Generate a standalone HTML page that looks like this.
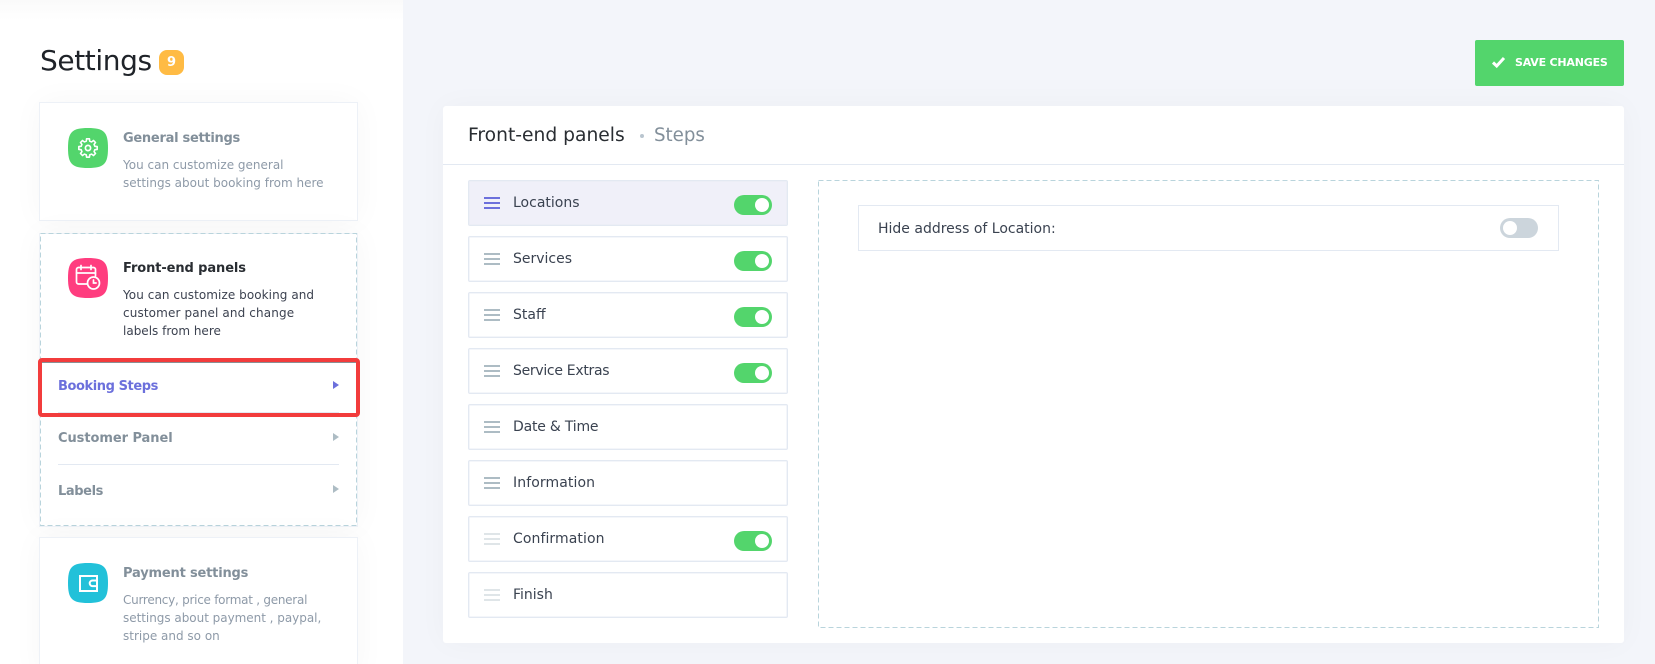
<!DOCTYPE html>
<html lang="en">
<head>
<meta charset="utf-8">
<title>Settings</title>
<style>
*{box-sizing:border-box;margin:0;padding:0}
html,body{width:1655px;height:664px;overflow:hidden;background:#f3f5fa}
body{position:relative;font-family:"DejaVu Sans","Liberation Sans",sans-serif;color:#292d32}
.abs,.t,.card,.item,.tg,.ic{position:absolute}
.t{white-space:nowrap;line-height:20px;height:20px}
#side{position:absolute;left:0;top:0;width:403px;height:664px;background:linear-gradient(#fafafa 0,#fff 20px)}
.card{left:39px;width:319px;background:#fff;border:1px solid #edf1f7;box-shadow:0 0 30px rgba(0,0,0,.035)}
.ic{left:68px;width:40px;height:40px}
.h{font-size:13px;font-weight:700;color:#828f9a}
.d{font-size:12px;color:#8e9aa8}
.dk{color:#292d32}
.dk2{color:#3c4250}
.m{font-size:13px;font-weight:700;color:#828f9a}
.ar{position:absolute;left:333px;width:0;height:0;border-left:6px solid #adbcc4;border-top:4.5px solid transparent;border-bottom:4.5px solid transparent}
.item{left:468px;width:320px;height:46px;background:#fff;border:1px solid #e3e9f2;border-radius:2px;box-shadow:inset 0 0 0 .5px #e9edf4}
.item.a{background:#f0f0f9}
.bars{position:absolute;left:484px;width:16px;height:12px;border-top:2px solid #adbcc4;border-bottom:2px solid #adbcc4}
.bars:after{content:"";position:absolute;left:0;right:0;top:3px;height:2px;background:#adbcc4}
.bars.a,.bars.a:after{border-color:#6c70dc}.bars.a:after{background:#6c70dc}
.bars.o,.bars.o:after{border-color:#dfe5e8}.bars.o:after{background:#dfe5e8}
.lb{left:513px;font-size:14px;color:#3a4250}
.tg{left:734px;width:38px;height:20px;border-radius:10px;background:#53d56c}
.tg:after{content:"";position:absolute;left:21px;top:3px;width:14px;height:14px;border-radius:50%;background:#fff}
.tg.off{background:#ccd5dc}
.tg.off:after{left:3px}
.dash{position:absolute;overflow:visible}
.dash rect{fill:none;stroke:#b9d4dc;stroke-width:1;stroke-dasharray:5 3}
</style>
</head>
<body>
<aside id="side">
  <div class="t" style="left:40px;top:43px;height:36px;line-height:36px;font-size:28px;letter-spacing:-.4px;color:#1f2329">Settings</div>
  <div class="abs" style="left:159px;top:50px;width:25px;height:25px;border-radius:8px;background:#ffbb44;color:#fff;font-size:13px;font-weight:700;text-align:center;line-height:25px">9</div>

  <section class="card" style="top:102px;height:119px"></section>
  <svg class="ic" style="top:128px" viewBox="0 0 40 40"><path d="M20 0C36 0 40 4 40 20C40 36 36 40 20 40C4 40 0 36 0 20C0 4 4 0 20 0Z" fill="#53d56c"/><g fill="none" stroke="#fff" stroke-width="1.700" stroke-linejoin="round" transform="translate(20 20)"><polygon transform="scale(.93)" points="-1.840,-7.370 -1.560,-9.880 1.560,-9.880 1.840,-7.370 3.910,-6.510 5.880,-8.090 8.090,-5.880 6.510,-3.910 7.370,-1.840 9.880,-1.560 9.880,1.560 7.370,1.840 6.510,3.910 8.090,5.880 5.880,8.090 3.910,6.510 1.840,7.370 1.560,9.880 -1.560,9.880 -1.840,7.370 -3.910,6.510 -5.880,8.090 -8.090,5.880 -6.510,3.910 -7.370,1.840 -9.880,1.560 -9.880,-1.560 -7.370,-1.840 -6.510,-3.910 -8.090,-5.880 -5.880,-8.090 -3.910,-6.510"/><circle r="2.600"/></g></svg>
  <div class="t h" style="left:123px;top:129px;letter-spacing:-.28px">General settings</div>
  <div class="t d" style="left:123px;top:155px">You can customize general</div>
  <div class="t d" style="left:123px;top:173px">settings about booking from here</div>

  <section class="card" style="top:233px;height:294px;left:39px;width:319px"></section>
  <svg class="dash" style="left:0;top:0" width="403" height="664"><rect x="40.500" y="233.500" width="316" height="292"/></svg>
  <svg class="ic" style="top:258px" viewBox="0 0 40 40"><path d="M20 0C36 0 40 4 40 20C40 36 36 40 20 40C4 40 0 36 0 20C0 4 4 0 20 0Z" fill="#ff3d7f"/><g fill="none" stroke="#fff" stroke-width="1.700" stroke-linecap="round"><path d="M19 26H10.500a2 2 0 0 1-2-2V11.500a2 2 0 0 1 2-2h15a2 2 0 0 1 2 2V18"/><path d="M8.500 15h19M13 7.500v4M23 7.500v4"/><circle cx="25.500" cy="25" r="6"/><path d="M25.500 22v3h2.600"/></g></svg>
  <div class="t h dk" style="left:123px;top:259px;letter-spacing:-.1px">Front-end panels</div>
  <div class="t d dk2" style="left:123px;top:285px;letter-spacing:.07px">You can customize booking and</div>
  <div class="t d dk2" style="left:123px;top:303px;letter-spacing:.13px">customer panel and change</div>
  <div class="t d dk2" style="left:123px;top:321px">labels from here</div>

  <div class="t m" style="left:58px;top:377px;color:#6c70dc;letter-spacing:-.42px">Booking Steps</div>
  <div class="ar" style="top:381px;border-left-color:#6c70dc"></div>
  <div class="abs" style="left:58px;top:412px;width:281px;height:1px;background:#e3e9f2"></div>
  <div class="t m" style="left:58px;top:429px;letter-spacing:-.06px">Customer Panel</div>
  <div class="ar" style="top:433px"></div>
  <div class="abs" style="left:58px;top:464px;width:281px;height:1px;background:#e3e9f2"></div>
  <div class="t m" style="left:58px;top:482px;letter-spacing:-.4px">Labels</div>
  <div class="ar" style="top:485px"></div>
  <div class="abs" style="left:38px;top:358px;width:322px;height:59px;border:4px solid #f23c3c;border-radius:4px;box-shadow:inset 0 1px 0 #8a8f94"></div>

  <section class="card" style="top:537px;height:140px"></section>
  <svg class="ic" style="top:563px" viewBox="0 0 40 40"><path d="M20 0C36 0 40 4 40 20C40 36 36 40 20 40C4 40 0 36 0 20C0 4 4 0 20 0Z" fill="#22c1d9"/><g fill="none" stroke="#fff" stroke-width="2"><path d="M12 13h17v15h-17z"/><path d="M29 17.500h-4.500a2.800 2.800 0 0 0 0 5.600h4.500"/></g></svg>
  <div class="t h" style="left:123px;top:564px;letter-spacing:-.18px">Payment settings</div>
  <div class="t d" style="left:123px;top:590px;letter-spacing:-.26px">Currency, price format , general</div>
  <div class="t d" style="left:123px;top:608px;letter-spacing:-.03px">settings about payment , paypal,</div>
  <div class="t d" style="left:123px;top:626px">stripe and so on</div>
</aside>

<div class="abs" style="left:1475px;top:40px;width:149px;height:46px;background:#53d56c;border-radius:2px"></div>
<svg class="abs" style="left:1491px;top:55px" width="15" height="14" viewBox="0 0 15 14"><path d="M2 7.500l3.700 3.500L13 3" fill="none" stroke="#fff" stroke-width="3"/></svg>
<div class="t" style="left:1515px;top:53px;font-size:11px;font-weight:700;letter-spacing:-.2px;color:#fff">SAVE CHANGES</div>

<main class="abs" style="left:443px;top:106px;width:1181px;height:537px;background:#fff;border-radius:3px;box-shadow:0 0 30px rgba(0,0,0,.03)"></main>
<div class="abs" style="left:443px;top:164px;width:1181px;height:1px;background:#e3e9f2"></div>
<div class="t" style="left:468px;top:126px;font-size:18.700px;color:#292d32">Front-end panels</div>
<div class="abs" style="left:640px;top:134px;width:4px;height:4px;border-radius:50%;background:#b9c5cf"></div>
<div class="t" style="left:654px;top:126px;font-size:18.200px;color:#828f9a">Steps</div>

<div class="item a" style="top:180px"></div><div class="bars a" style="top:197px"></div><div class="t lb" style="top:193px">Locations</div><div class="tg" style="top:195px"></div>
<div class="item" style="top:236px"></div><div class="bars" style="top:253px"></div><div class="t lb" style="top:249px">Services</div><div class="tg" style="top:251px"></div>
<div class="item" style="top:292px"></div><div class="bars" style="top:309px"></div><div class="t lb" style="top:305px">Staff</div><div class="tg" style="top:307px"></div>
<div class="item" style="top:348px"></div><div class="bars" style="top:365px"></div><div class="t lb" style="top:361px;letter-spacing:-.3px">Service Extras</div><div class="tg" style="top:363px"></div>
<div class="item" style="top:404px"></div><div class="bars" style="top:421px"></div><div class="t lb" style="top:417px;letter-spacing:-.2px">Date &amp; Time</div>
<div class="item" style="top:460px"></div><div class="bars" style="top:477px"></div><div class="t lb" style="top:473px;letter-spacing:.1px">Information</div>
<div class="item" style="top:516px"></div><div class="bars o" style="top:533px"></div><div class="t lb" style="top:529px;letter-spacing:.08px">Confirmation</div><div class="tg" style="top:531px"></div>
<div class="item" style="top:572px"></div><div class="bars o" style="top:589px"></div><div class="t lb" style="top:585px">Finish</div>

<svg class="dash" style="left:0;top:0" width="1655" height="664"><rect x="818.500" y="180.500" width="780" height="447"/></svg>
<div class="abs" style="left:858px;top:205px;width:701px;height:46px;border:1px solid #e3e9f2"></div>
<div class="t" style="left:878px;top:219px;font-size:14px;color:#3a4250">Hide address of Location:</div>
<div class="tg off" style="left:1500px;top:218px"></div>
</body>
</html>
